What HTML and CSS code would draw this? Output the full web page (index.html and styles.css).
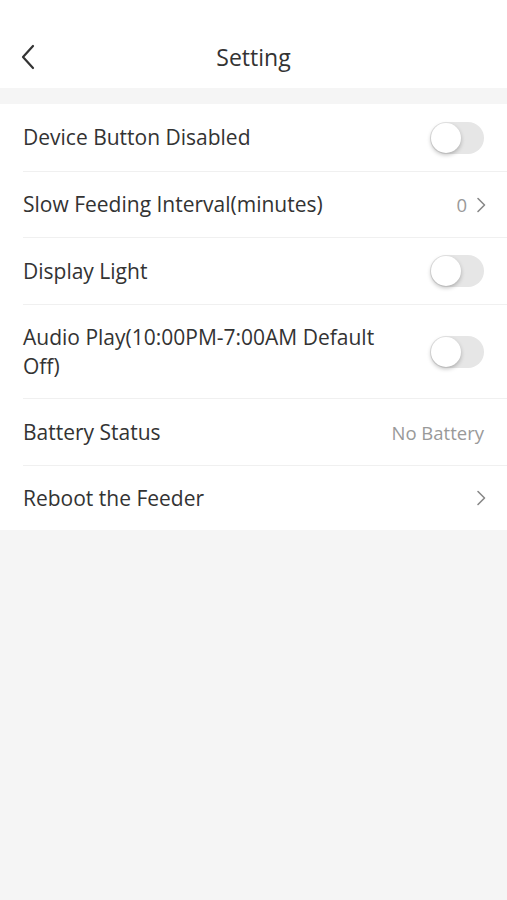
FILE: index.html
```html
<!DOCTYPE html>
<html lang="en">
<head>
    <meta charset="UTF-8">
    <meta name="viewport" content="width=device-width, initial-scale=1.0">
    <title>Setting</title>
    <link rel="stylesheet" href="styles.css">
</head>
<body>
    <!-- header -->
    <div class="header">
        <a class="back" href="#back">
            <svg width="16" height="26" viewBox="0 0 16 26"><path d="M13 2 L3 13 L13 24" fill="none" stroke="#333" stroke-width="2.2" stroke-linecap="round" stroke-linejoin="round"/></svg>
        </a>
        <h1>Setting</h1>
    </div>

    <!-- settings list -->
    <div class="list">
        <div class="row r1">
            <span class="label">Device Button Disabled</span>
            <span class="switch"><span class="knob"></span></span>
        </div>
        <div class="row r2">
            <span class="label">Slow Feeding Interval(minutes)</span>
            <span class="value">0</span>
            <svg class="arrow" width="10" height="16" viewBox="0 0 10 16"><path d="M2 1.5 L8.5 8 L2 14.5" fill="none" stroke="#888" stroke-width="1.6" stroke-linecap="round" stroke-linejoin="round"/></svg>
        </div>
        <div class="row r3">
            <span class="label">Display Light</span>
            <span class="switch"><span class="knob"></span></span>
        </div>
        <div class="row r4">
            <span class="label">Audio Play(10:00PM-7:00AM Default Off)</span>
            <span class="switch"><span class="knob"></span></span>
        </div>
        <div class="row r5">
            <span class="label">Battery Status</span>
            <span class="value">No Battery</span>
        </div>
        <div class="row r6">
            <span class="label">Reboot the Feeder</span>
            <svg class="arrow" width="10" height="16" viewBox="0 0 10 16"><path d="M2 1.5 L8.5 8 L2 14.5" fill="none" stroke="#888" stroke-width="1.6" stroke-linecap="round" stroke-linejoin="round"/></svg>
        </div>
    </div>
</body>
</html>
```

FILE: styles.css
```css
body {
    margin: 0;
    font-family: "Open Sans", "Liberation Sans", Arial, sans-serif;
    background-color: #f5f5f5;
    color: #333;
}

/* header */
.header {
    height: 88px;
    background-color: #fff;
    display: flex;
    align-items: center;
    justify-content: center;
    position: relative;
    margin-bottom: 16px;
}
.header h1 {
    margin: 0;
    padding-top: 26px;
    font-size: 23px;
    font-weight: normal;
    color: #333;
}
.back {
    position: absolute;
    left: 20px;
    top: 44px;
    display: block;
}

/* list */
.list {
    background-color: #fff;
}
.row {
    display: flex;
    align-items: center;
    margin-left: 23px;
    padding-right: 23px;
    border-bottom: 1px solid #f0f0f0;
    box-sizing: border-box;
}
.r1 { min-height: 68px; }
.r2 { min-height: 66px; }
.r3 { min-height: 67px; }
.r4 { min-height: 94px; }
.r5 { min-height: 67px; }
.r6 { min-height: 64px; border-bottom: none; }

.label {
    flex: 1;
    font-size: 21px;
    line-height: 29px;
    color: #333;
    padding-right: 30px;
}
.value {
    font-size: 18.5px;
    color: #999;
}
.arrow {
    margin-left: 9px;
    margin-right: -2px;
}

/* switch */
.switch {
    width: 54px;
    height: 32px;
    border-radius: 16px;
    background-color: #e6e6e6;
    position: relative;
    flex-shrink: 0;
}
.knob {
    position: absolute;
    left: 1px;
    top: 1px;
    width: 30px;
    height: 30px;
    border-radius: 50%;
    background-color: #fff;
    box-shadow: 0 2px 4px rgba(0, 0, 0, 0.25);
}
```
